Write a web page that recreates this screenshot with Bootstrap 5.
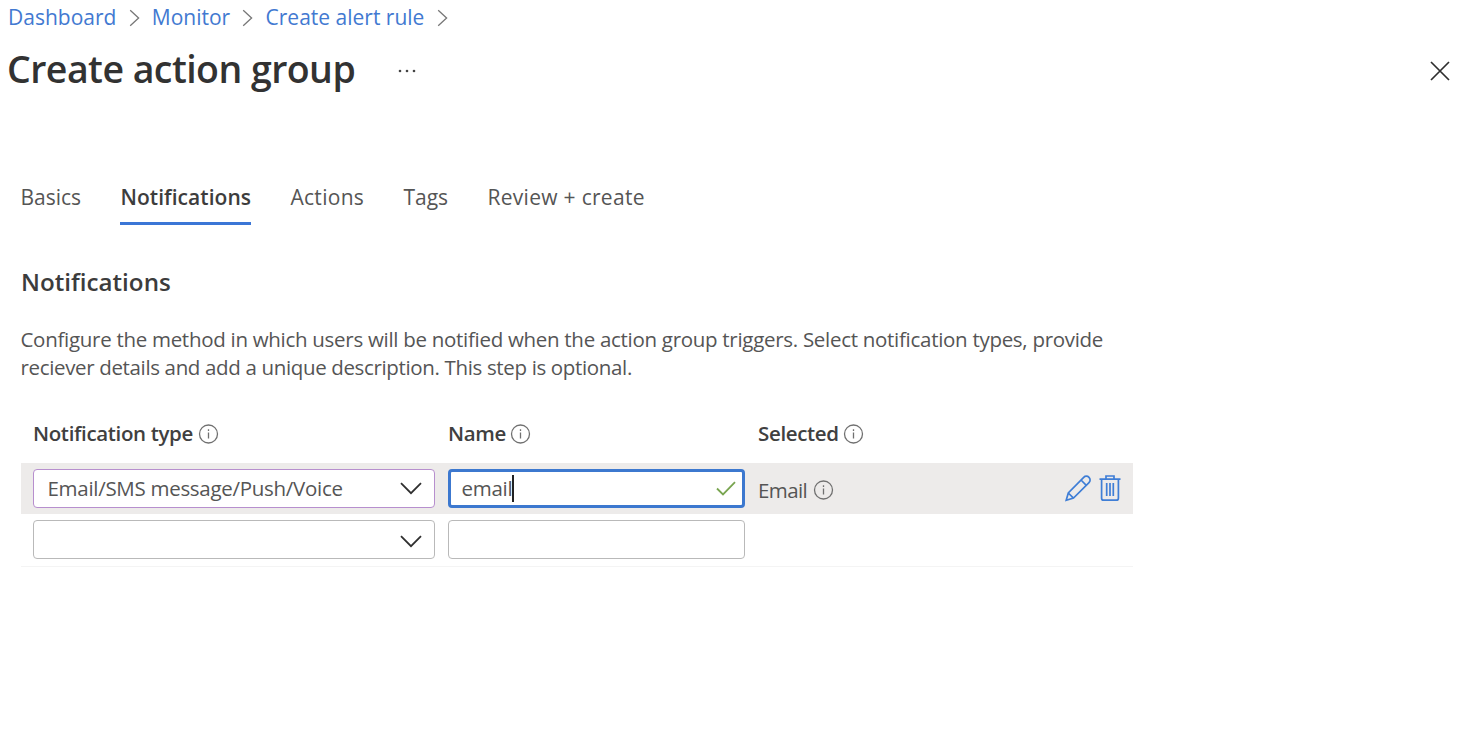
<!DOCTYPE html>
<html lang="en">
<head>
<meta charset="utf-8">
<meta name="viewport" content="width=device-width, initial-scale=1">
<title>Create action group</title>
<link href="https://cdn.jsdelivr.net/npm/bootstrap@5.3.0/dist/css/bootstrap.min.css" rel="stylesheet">
<style>
  body { font-family: "Open Sans", "Noto Sans", sans-serif; font-size: 20.5px; letter-spacing: -.29px; color: #555; background: #fff; overflow: hidden; }
  svg { fill: none; flex: none; display: block; }
  .crumbs { height: 36px; padding-left: 8px; font-size: 21px; letter-spacing: 0; }
  .crumbs a { color: #4279d1; }
  .crumbs svg { margin: 0 12.2px; stroke: #777; stroke-width: 1.3; }
  .title-bar { height: 65px; padding: 0 8px 0 7px; }
  .page-title { font-size: 37.5px; font-weight: 600; letter-spacing: -.55px; line-height: 1; color: #323232; }
  .more { margin: 4px 0 0 42px; fill: #444; }
  .wizard-tabs { margin: 67px 0 0 20.5px; font-size: 21px; letter-spacing: 0; gap: 39.3px; }
  .wizard-tabs .nav-link { color: #555; height: 57px; padding: 0; border-radius: 0; line-height: 58px; }
  .wizard-tabs .nav-link.active { color: #3d3d3d; font-weight: 600; border-bottom: 3px solid #3b76d6; letter-spacing: .05px; }
  .wizard-tabs .tab-wide { letter-spacing: .3px; }
  .section-title { margin: 43px 0 0 21px; font-size: 24.2px; letter-spacing: 0; line-height: 28px; font-weight: 600; color: #3c3c3c; }
  .intro { margin: 28.5px 0 0 20.5px; line-height: 28.4px; width: 1100px; }
  .intro .closing { letter-spacing: -.35px; }
  .rule-grid { width: 1112px; margin: 23.5px 0 0 21px; border-bottom: 1.5px solid #f4f4f4; }
  .rule-row { display: grid; grid-template-columns: 402px 297px 1fr auto; column-gap: 13px; padding: 0 12px; align-items: center; height: 52px; }
  .rule-row.head { height: 58px; font-weight: 600; color: #404040; letter-spacing: -.35px; }
  .rule-row.current { height: 51px; background: #edebea; }
  .info { stroke: #707070; stroke-width: 1.3; }
  .field { height: 39px; border: 1.5px solid #b9b9b9; border-radius: 4px; background: #fff; }
  .field.edited { border-color: #b78fce; }
  .field.focused { border: 3px solid #3c78cf; }
  .chevron { stroke: #303030; stroke-width: 1.8; margin-right: 12.5px; }
  .caret { width: 1.5px; height: 27px; background: #222; }
  .tools svg { stroke: #3f7ed6; stroke-width: 1.7; }
</style>
</head>
<body>
<svg width="0" height="0" class="position-absolute">
  <symbol id="i-info" viewBox="0 0 20 20"><circle cx="10" cy="10" r="9"/><path d="M10 8.4v6M10 5.2v1.7"/></symbol>
  <symbol id="i-sep" viewBox="0 0 11 18"><path d="M1.2 1.2 9.6 9l-8.4 7.8"/></symbol>
  <symbol id="i-down" viewBox="0 0 22 13"><path d="M1 1.2 11 11.2 21 1.2"/></symbol>
</svg>

<nav class="crumbs d-flex align-items-center" aria-label="breadcrumb">
  <a href="#" class="text-decoration-none">Dashboard</a>
  <svg width="11" height="18"><use href="#i-sep"/></svg>
  <a href="#" class="text-decoration-none">Monitor</a>
  <svg width="11" height="18"><use href="#i-sep"/></svg>
  <a href="#" class="text-decoration-none">Create alert rule</a>
  <svg width="11" height="18"><use href="#i-sep"/></svg>
</nav>

<header class="title-bar d-flex align-items-center">
  <h1 class="page-title mb-0">Create action group</h1>
  <svg class="more" width="20" height="4" viewBox="0 0 20 4"><circle cx="3" cy="2" r="1.3"/><circle cx="10" cy="2" r="1.3"/><circle cx="17" cy="2" r="1.3"/></svg>
  <svg class="ms-auto mt-1" width="20" height="20" viewBox="0 0 20 20" stroke="#2e2e2e" stroke-width="1.7"><path d="M1 1l18 18M19 1 1 19"/></svg>
</header>

<ul class="wizard-tabs nav">
  <li class="nav-item"><a class="nav-link" href="#">Basics</a></li>
  <li class="nav-item"><a class="nav-link active" href="#">Notifications</a></li>
  <li class="nav-item"><a class="nav-link tab-wide" href="#">Actions</a></li>
  <li class="nav-item"><a class="nav-link" href="#">Tags</a></li>
  <li class="nav-item"><a class="nav-link tab-wide" href="#">Review + create</a></li>
</ul>

<h2 class="section-title">Notifications</h2>
<p class="intro mb-0">Configure the method in which users will be notified when the action group triggers. Select notification types, provide<br><span class="closing">reciever details and add a unique description. This step is optional.</span></p>

<section class="rule-grid">
  <div class="rule-row head">
    <div class="d-flex align-items-center gap-1"><span style="margin-right:1px">Notification type</span> <svg class="info" width="21" height="20"><use href="#i-info"/></svg></div>
    <div class="d-flex align-items-center gap-1">Name <svg class="info" width="21" height="20"><use href="#i-info"/></svg></div>
    <div class="d-flex align-items-center gap-1">Selected <svg class="info" width="21" height="20"><use href="#i-info"/></svg></div>
  </div>
  <div class="rule-row current">
    <div class="field edited d-flex align-items-center justify-content-between">
      <span style="margin-left:13.5px">Email/SMS message/Push/Voice</span>
      <svg class="chevron" width="22" height="13"><use href="#i-down"/></svg>
    </div>
    <div class="field focused d-flex align-items-center">
      <span style="margin-left:10.5px">email</span><span class="caret"></span>
      <svg class="ms-auto" width="20" height="15" viewBox="0 0 20 15" stroke="#79a550" stroke-width="1.8" style="margin-right:6.5px"><path d="M1 7.5l6 6L19 1.2"/></svg>
    </div>
    <div class="d-flex align-items-center pt-1" style="letter-spacing:-.6px">Email <svg class="info" width="21" height="20" style="margin-left:6px"><use href="#i-info"/></svg></div>
    <div class="tools d-flex align-items-center">
      <svg width="26" height="28" viewBox="0 0 26 28"><path d="M1.2 26.3 3.3 19 18.7 3.3a3.7 3.7 0 0 1 5.3 5.3L8.5 24.1zM16 6l5.3 5.3M3.3 19l5.2 5.1"/></svg>
      <svg width="22" height="28" viewBox="0 0 22 28" style="margin-left:8px"><path d="M.5 5.2h21M7 5.2V2h8v3.2M2.6 5.2v19a2 2 0 0 0 2 2h12.8a2 2 0 0 0 2-2v-19M7.7 9v13M11 9v13M14.3 9v13"/></svg>
    </div>
  </div>
  <div class="rule-row">
    <div class="field d-flex align-items-center justify-content-end"><svg class="chevron mt-1" width="22" height="13"><use href="#i-down"/></svg></div>
    <div class="field"></div>
  </div>
</section>
<script src="https://cdn.jsdelivr.net/npm/bootstrap@5.3.0/dist/js/bootstrap.bundle.min.js"></script>
</body>
</html>
